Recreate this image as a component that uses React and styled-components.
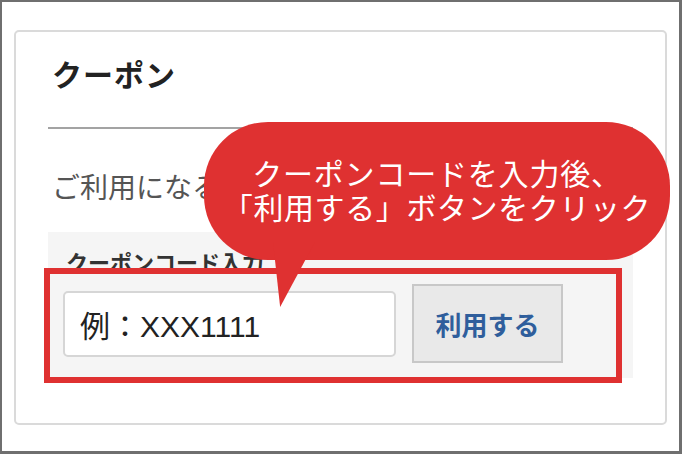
import React from 'react'
import styled, { createGlobalStyle } from 'styled-components'

const GlobalStyle = createGlobalStyle`
  html, body {
    margin: 0;
    padding: 0;
    background: #ffffff;
  }
  body {
    font-family: "Liberation Sans", "Noto Sans CJK JP", sans-serif;
  }
`

const Frame = styled.div`
  width: 682px;
  height: 454px;
  box-sizing: border-box;
  border: 2px solid #6f6f6f;
  border-right-width: 3px;
  border-bottom-width: 3px;
  padding: 28px 12px 26px 12px;
  background: #ffffff;
`

const Card = styled.div`
  position: relative;
  height: 100%;
  box-sizing: border-box;
  border: 2px solid #dadada;
  border-radius: 5px;
  padding: 0 32px;
`

const Title = styled.h2`
  margin: 22px 0 0 4px;
  font-size: 30px;
  line-height: 44px;
  font-weight: 700;
  color: #222;
  letter-spacing: 1px;
`

const Divider = styled.hr`
  margin: 29px 0 0 0;
  border: none;
  height: 2px;
  background: #a3a3a3;
`

const Notice = styled.p`
  margin: 40px 0 0 4px;
  font-size: 28px;
  line-height: 40px;
  color: #555;
  white-space: nowrap;
  overflow: hidden;
`

const FormPanel = styled.div`
  position: relative;
  margin-top: 23px;
  background: #f5f5f5;
  padding: 17px 15px 15px 15px;
`

const Label = styled.div`
  padding-left: 3px;
  font-size: 22px;
  line-height: 30px;
  font-weight: 700;
  color: #333;
  white-space: nowrap;
`

const Row = styled.div`
  display: flex;
  align-items: center;
  gap: 16px;
  margin-top: 5px;
`

const CodeInput = styled.div`
  width: 333px;
  height: 66px;
  box-sizing: border-box;
  border: 2px solid #d6d6d6;
  border-radius: 5px;
  background: #fff;
  display: flex;
  align-items: center;
  padding-left: 15px;
  font-size: 30px;
  color: #222;
`

const ApplyButton = styled.button`
  width: 151px;
  height: 79px;
  box-sizing: border-box;
  border: 2px solid #c8c8c8;
  background: #e9e9e9;
  color: #2f5e9c;
  font-family: inherit;
  font-size: 26px;
  font-weight: 700;
  padding: 0;
`

const Highlight = styled.div`
  position: absolute;
  left: -4px;
  top: 36px;
  width: 578px;
  height: 115px;
  box-sizing: border-box;
  border: 6px solid #df3131;
`

const Bubble = styled.div`
  position: absolute;
  left: 188px;
  top: 90px;
  width: 466px;
  height: 138px;
  border-radius: 64px;
  background: #df3131;
  color: #fff;
  display: flex;
  flex-direction: column;
  align-items: center;
  justify-content: center;
  font-size: 30px;
  line-height: 34px;
  text-align: center;
  padding-top: 2px;
  box-sizing: border-box;

  &::after {
    content: "";
    position: absolute;
    left: 69px;
    top: 120px;
    width: 42px;
    height: 65px;
    background: #df3131;
    clip-path: polygon(0 0, 100% 0, 17% 100%);
  }
`

const BubbleLine = styled.span`
  display: block;
  white-space: nowrap;
  letter-spacing: ${props => props.spacing || 0}px;
`

const App = () => {
  return (
    <Frame>
      <GlobalStyle />
      <Card>
        <Title>クーポン</Title>
        <Divider />
        <Notice>ご利用になるクーポンコードを入力</Notice>
        <FormPanel>
          <Label>クーポンコード入力</Label>
          <Row>
            <CodeInput>例：XXX1111</CodeInput>
            <ApplyButton>利用する</ApplyButton>
          </Row>
          <Highlight />
        </FormPanel>
        <Bubble>
          <BubbleLine spacing={0.8}>クーポンコードを入力後、</BubbleLine>
          <BubbleLine spacing={0.6}>「利用する」ボタンをクリック</BubbleLine>
        </Bubble>
      </Card>
    </Frame>
  )
}

export default App
